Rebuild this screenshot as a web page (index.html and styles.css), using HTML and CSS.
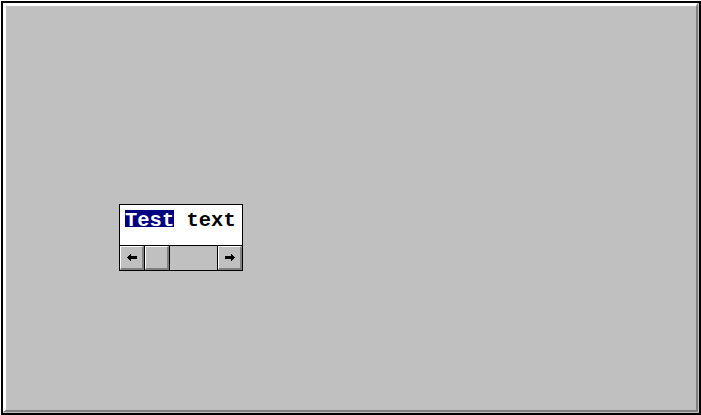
FILE: index.html
```html
<!DOCTYPE html>
<html>
<head>
<meta charset="utf-8">
<link rel="stylesheet" href="styles.css">
</head>
<body>
<div class="frame">
  <div class="bevel">
    <div class="widget">
      <div class="textarea">
        <div class="line"><span class="sel">Test</span> text</div>
      </div>
      <div class="scrollbar">
        <div class="btn">
          <svg width="10" height="7" viewBox="0 0 10 7" shape-rendering="crispEdges"><rect x="0" y="3" width="1" height="1"/><rect x="1" y="2" width="1" height="3"/><rect x="2" y="1" width="1" height="5"/><rect x="3" y="0" width="1" height="7"/><rect x="4" y="2" width="6" height="3"/></svg>
        </div>
        <div class="sep"></div>
        <div class="thumb"></div>
        <div class="sep"></div>
        <div class="track"></div>
        <div class="sep"></div>
        <div class="btn">
          <svg width="10" height="7" viewBox="0 0 10 7" shape-rendering="crispEdges"><rect x="9" y="3" width="1" height="1"/><rect x="8" y="2" width="1" height="3"/><rect x="7" y="1" width="1" height="5"/><rect x="6" y="0" width="1" height="7"/><rect x="0" y="2" width="6" height="3"/></svg>
        </div>
      </div>
    </div>
  </div>
</div>
</body>
</html>
```

FILE: styles.css
```css
html, body {
  margin: 0;
  padding: 0;
  background: #ffffff;
}

body {
  width: 701px;
  height: 415px;
  overflow: hidden;
}

.frame {
  margin: 1px 0 0 1px;
  width: 700px;
  height: 414px;
  box-sizing: border-box;
  border: 2px solid #000000;
  padding: 0 1px 1px 0;
  background: #c0c0c0;
}

.bevel {
  box-sizing: border-box;
  height: 100%;
  border-top: 3px solid #ffffff;
  border-left: 3px solid #ffffff;
  border-right: 2px solid #808080;
  border-bottom: 2px solid #808080;
  padding: 198px 0 0 113px;
  background: #c0c0c0;
}

.widget {
  width: 124px;
  box-sizing: border-box;
  border: 1px solid #000000;
  background: #ffffff;
}

.textarea {
  height: 41px;
  box-sizing: border-box;
  padding: 5px 0 0 5px;
  border-bottom: 1px solid #000000;
  background: #ffffff;
}

.line {
  font-family: "Liberation Mono", "Courier New", monospace;
  font-weight: bold;
  font-size: 20.5px;
  line-height: 13px;
  color: #000000;
  white-space: pre;
}

.sel {
  display: inline-block;
  padding-top: 4px;
  line-height: 13px;
  background: #000080;
  color: #ffffff;
}

.scrollbar {
  display: flex;
  height: 24px;
  background: #c0c0c0;
}

.btn, .thumb {
  width: 24px;
  height: 24px;
  box-sizing: border-box;
  border-top: 1px solid #ffffff;
  border-left: 1px solid #ffffff;
  border-right: 2px solid #808080;
  border-bottom: 2px solid #808080;
  background: #c0c0c0;
}

.btn {
  display: flex;
  align-items: center;
  justify-content: center;
}

.btn svg {
  display: block;
  fill: #000000;
}

.sep {
  width: 1px;
  background: #000000;
}

.track {
  flex: 1;
  background: #c0c0c0;
}
```
